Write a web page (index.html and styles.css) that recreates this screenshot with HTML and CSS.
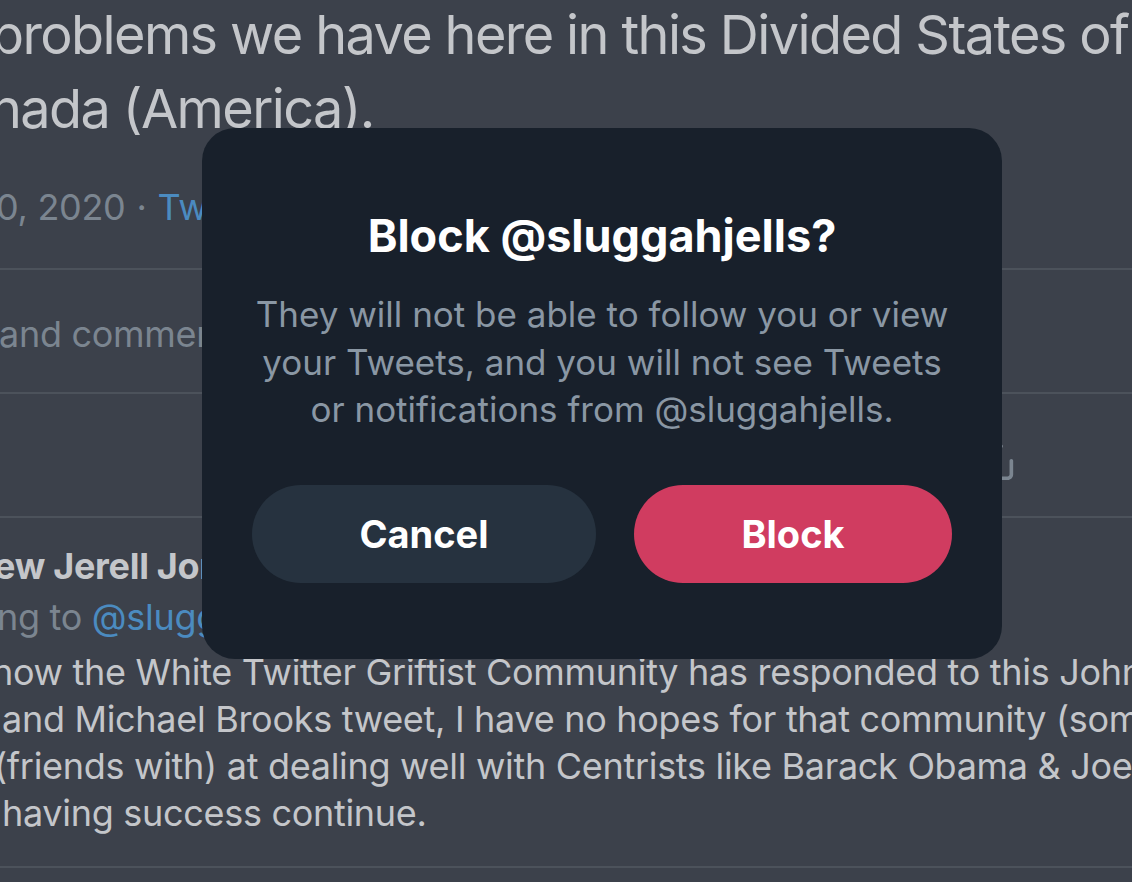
FILE: index.html
```html
<!DOCTYPE html>
<html lang="en">
<head>
<meta charset="utf-8">
<title>Block @sluggahjells?</title>
<link rel="stylesheet" href="styles.css">
</head>
<body>
<div class="page">
  <section class="detail">
    <div class="tweet-text">
      <div class="line line-1">problems we have here in this Divided States of</div>
      <div class="line line-2">nada (America).</div>
    </div>
    <div class="meta"><span class="date">0, 2020</span><span class="dot">·</span><a class="source">Twitter Web App</a></div>
  </section>
  <section class="stats">
    <span class="stats-text">and comments</span>
  </section>
  <section class="actions">
    <svg class="share-icon" viewBox="0 0 24 24" aria-hidden="true">
      <path d="M17.53 7.47l-5-5c-.293-.293-.768-.293-1.06 0l-5 5c-.294.293-.294.768 0 1.06s.767.294 1.06 0l3.72-3.72V15c0 .414.336.75.75.75s.75-.336.75-.75V4.81l3.72 3.72c.146.147.338.22.53.22s.384-.072.53-.22c.293-.293.293-.767 0-1.06z"/>
      <path d="M19.708 21.944H4.292C3.028 21.944 2 20.916 2 19.652V14c0-.414.336-.75.75-.75s.75.336.75.75v5.652c0 .437.355.792.792.792h15.416c.437 0 .792-.355.792-.792V14c0-.414.336-.75.75-.75s.75.336.75.75v5.652c0 1.264-1.028 2.292-2.292 2.292z"/>
    </svg>
  </section>
  <section class="reply">
    <div class="reply-name">ew Jerell Jones</div>
    <div class="reply-to"><span class="muted">ng to </span><a class="mention">@sluggahjells</a></div>
    <div class="reply-body">
      <div class="body-line body-1">how the White Twitter Griftist Community has responded to this John</div>
      <div class="body-line body-2">and Michael Brooks tweet, I have no hopes for that community (some</div>
      <div class="body-line body-3">(friends with) at dealing well with Centrists like Barack Obama &amp; Joe</div>
      <div class="body-line body-4">having success continue.</div>
    </div>
  </section>
</div>

<div class="modal" role="dialog" aria-labelledby="modal-title">
  <h1 class="modal-title" id="modal-title">Block @sluggahjells?</h1>
  <p class="modal-text">They will not be able to follow you or view your Tweets, and you will not see Tweets or notifications from @sluggahjells.</p>
  <div class="modal-buttons">
    <button class="btn btn-cancel">Cancel</button>
    <button class="btn btn-block">Block</button>
  </div>
</div>
</body>
</html>
```
FILE: styles.css
```css
html, body {
  margin: 0;
  padding: 0;
  width: 1132px;
  height: 882px;
  overflow: hidden;
  background: #3c414b;
}

body {
  font-family: Inter, "Noto Sans", sans-serif;
  color: #c4c6ca;
  position: relative;
}

.page {
  width: 1132px;
  overflow: hidden;
}

.detail {
  display: flow-root;
  height: 268px;
  border-bottom: 2px solid #4c525b;
}

.tweet-text {
  margin-top: -2px;
  font-size: 54px;
  line-height: 74px;
  letter-spacing: -1.6px;
  white-space: nowrap;
}

.line-1 { margin-left: -9px; }
.line-2 { margin-left: -10px; }

.meta {
  margin-top: 37px;
  font-size: 36px;
  line-height: 48px;
  color: #7b8590;
  white-space: nowrap;
  margin-left: -4px;
  letter-spacing: -0.3px;
}

.dot { margin: 0 11px; }

.source { color: #4b8bc0; }

.stats {
  height: 122px;
  border-bottom: 2px solid #4c525b;
  font-size: 36px;
  line-height: 122px;
  color: #7b8590;
  white-space: nowrap;
  letter-spacing: -0.3px;
}

.stats-text {
  display: inline-block;
  padding-top: 3px;
  margin-left: -1px;
}

.actions {
  height: 122px;
  border-bottom: 2px solid #4c525b;
  display: flex;
  align-items: center;
  padding-left: 960px;
}

.share-icon {
  width: 58px;
  height: 58px;
  fill: #7b8590;
  margin-top: 2px;
}

.reply {
  height: 348px;
  border-bottom: 2px solid #4c525b;
  white-space: nowrap;
  letter-spacing: -0.3px;
}

.reply-name {
  padding-top: 24px;
  font-size: 36px;
  line-height: 48px;
  font-weight: 700;
  margin-left: -6px;
}

.reply-to {
  margin-top: 3px;
  font-size: 36px;
  line-height: 48px;
  color: #7b8590;
  margin-left: -3px;
}

.mention { color: #4b8bc0; }

.reply-body {
  margin-top: 8px;
  font-size: 36px;
  line-height: 47px;
}

.body-1 { margin-left: -8px; }
.body-2 { margin-left: 2px; }
.body-3 { margin-left: -6px; }
.body-4 { margin-left: 2px; }

/* Modal */
.modal {
  position: absolute;
  left: 202px;
  top: 128px;
  width: 800px;
  box-sizing: border-box;
  padding: 80px 50px 76px;
  background: #18202b;
  border-radius: 33px;
  text-align: center;
}

.modal-title {
  margin: 0;
  font-size: 45px;
  line-height: 56px;
  font-weight: 700;
  color: #ffffff;
}

.modal-text {
  margin: 27px 0 0;
  font-size: 35px;
  line-height: 47.5px;
  color: #8a97a4;
}

.modal-buttons {
  display: flex;
  gap: 38px;
  margin-top: 51px;
}

.btn {
  flex: 1 1 auto;
  height: 98px;
  border: 0;
  border-radius: 49px;
  font-family: Inter, "Noto Sans", sans-serif;
  font-size: 38px;
  font-weight: 700;
  color: #ffffff;
  padding: 0 20px;
}

.btn-cancel { background: #26323f; }
.btn-block { background: #d03c60; }
```
